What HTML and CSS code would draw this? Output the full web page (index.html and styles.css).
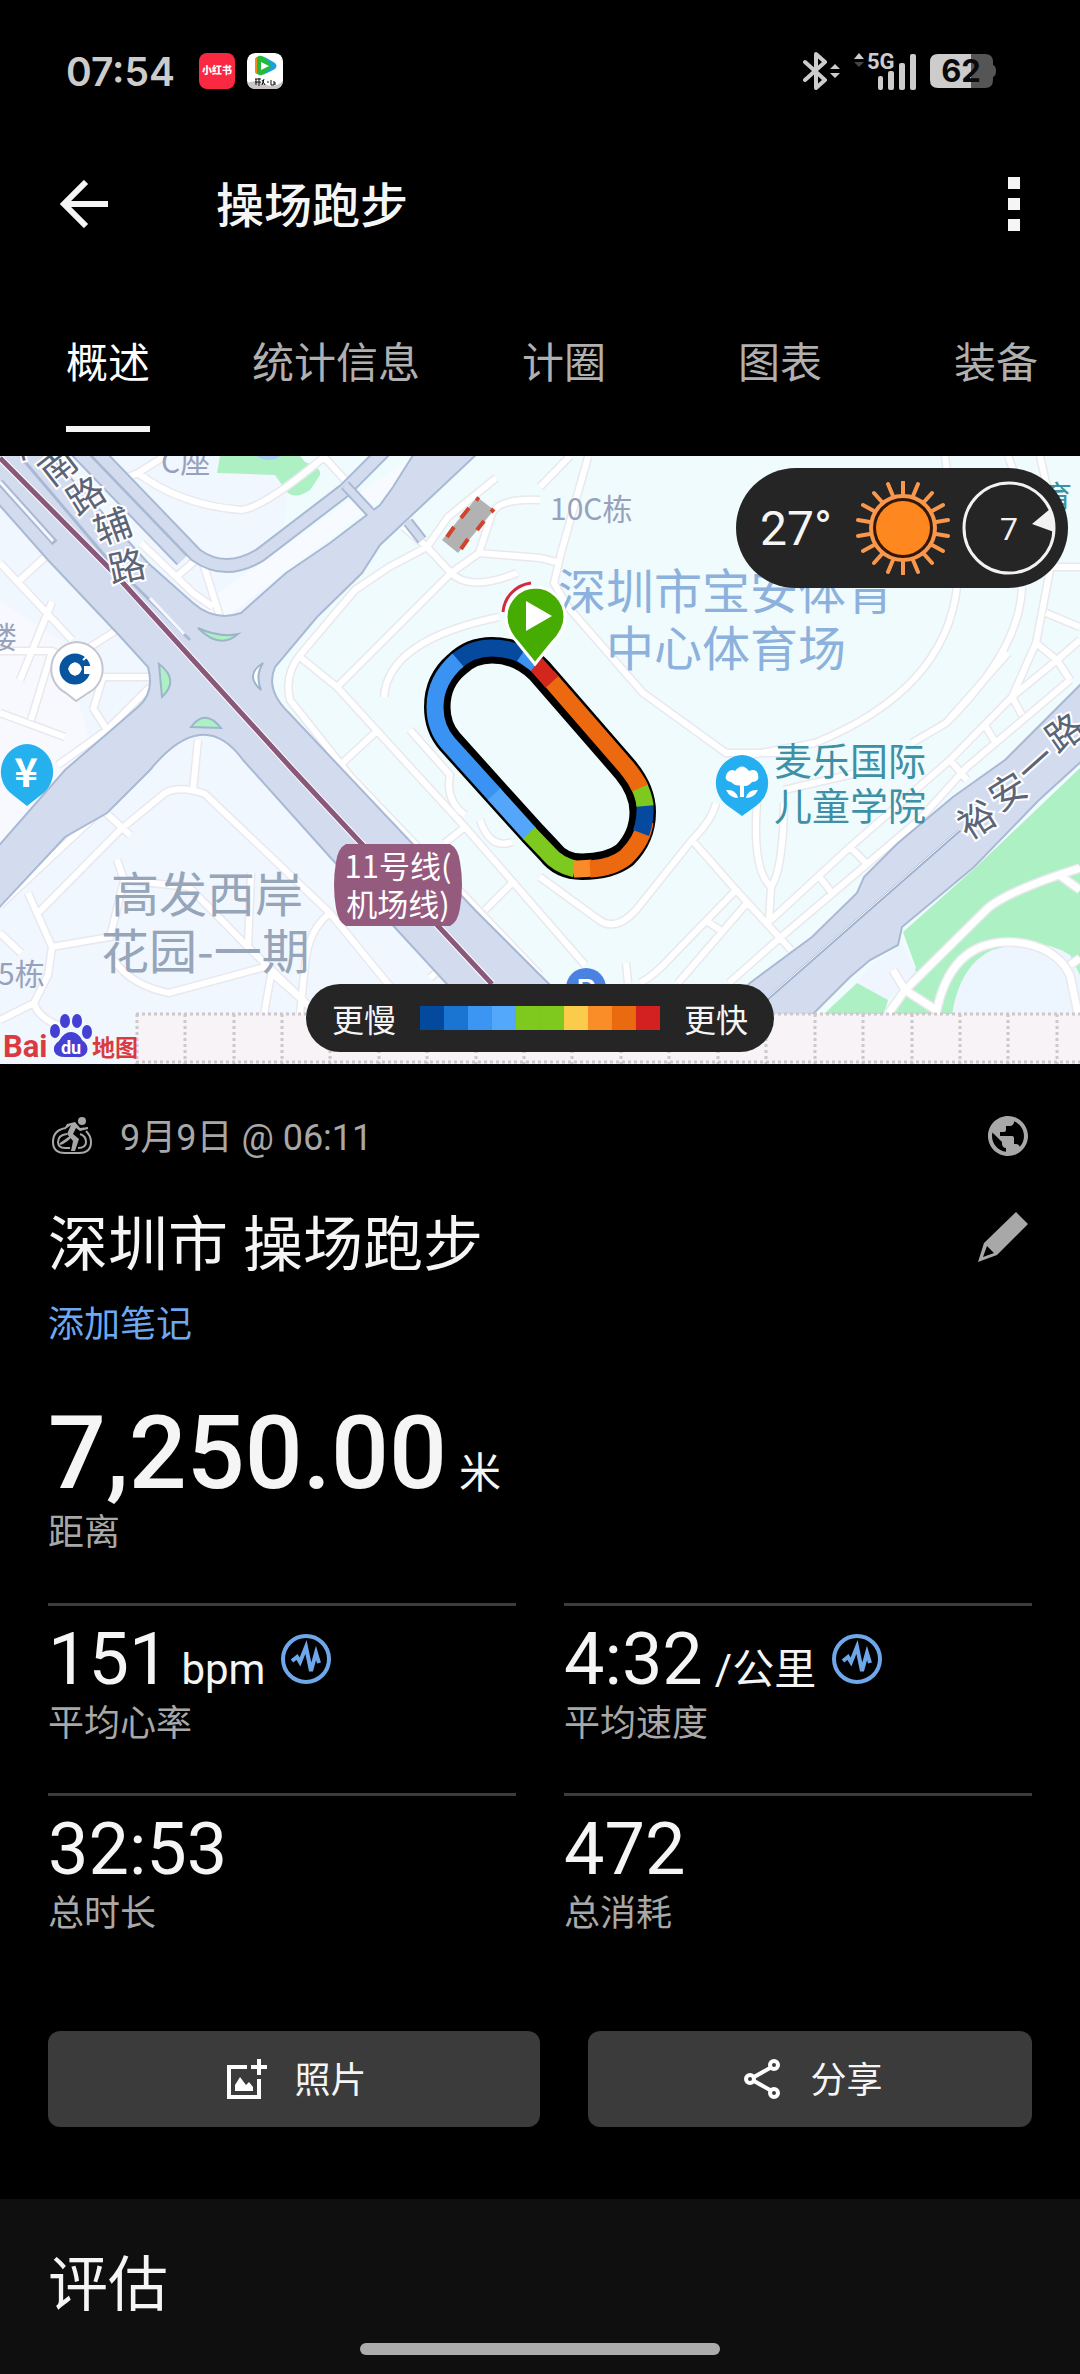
FILE: index.html
```html
<!DOCTYPE html>
<html lang="zh-CN">
<head>
  <meta charset="UTF-8">
  <title>操场跑步</title>
  <meta name="viewport" content="width=device-width, initial-scale=1.0">
  <link rel="stylesheet" href="styles.css">
</head>
<body>

  <!-- status bar -->
  <div class="status-bar">
    <span class="clock">07:54</span>
    <span class="app-icon app-red">小红书</span>
    <svg class="app-icon" viewBox="0 0 36 36">
      <rect width="36" height="36" rx="8" fill="#fff"/>
      <path d="M0 30q9 -4 18 1t18 -3v2q0 6 -6 6H8q-8 0 -8 -6z" fill="#c9c5c5"/>
      <path d="M8 7q0 -4 4 -3v17q-4 1 -4 -3z" fill="#f48a1c"/>
      <path d="M10 6q0 -4 5 -3l12 7q4 3 0 6l-12 6q-4 1 -5 -3z" fill="#25b93a"/>
      <path d="M16 3l12 7q3 3 0 6l-12 6q6 -5 8 -9q-2 -5 -8 -10z" fill="#1ba0e0"/>
      <path d="M14 9l8 4l-8 4z" fill="#fff"/>
      <path d="M8 26h6M8 29h6M9 26v6M12 25v8M15 27l3 5M17 26l-2 6M20 29h2M24 27v5h3v-4M28 29v3" stroke="#111" fill="none"/>
    </svg>
    <div class="status-right">
      <svg width="38" height="38" viewBox="0 0 38 38">
        <path d="M3 10l20 18l-9 8V2l9 8L3 28" fill="none" stroke="#ccc" stroke-width="4" stroke-linejoin="round" stroke-linecap="round"/>
        <path d="M28 17l5 -5l5 5zM28 21h10l-5 5z" fill="#ccc"/>
      </svg>
      <svg class="signal" width="62" height="38" viewBox="0 0 62 38">
        <path d="M0 7l5 -6l5 6z" fill="#ccc"/>
        <path d="M0 10h10l-5 5z" fill="#444"/>
        <text x="13" y="17" class="net">5G</text>
        <g fill="#ccc">
          <rect x="24" y="24" width="5" height="14" rx="2"/>
          <rect x="34" y="19" width="6" height="19" rx="2"/>
          <rect x="45" y="11" width="6" height="27" rx="2"/>
          <rect x="56" y="2" width="6" height="36" rx="2"/>
        </g>
      </svg>
      <svg width="66" height="34" viewBox="0 0 66 34">
        <path d="M8 0H41V34H8Q0 34 0 26V8Q0 0 8 0z" fill="#ccc"/>
        <path d="M41 0H55Q63 0 63 8V26Q63 34 55 34H41zM63 11q3 1 3 6t-3 6z" fill="#555"/>
        <text x="31" y="28" class="level" text-anchor="middle">62</text>
      </svg>
    </div>
  </div>

  <header class="app-bar">
    <button class="icon-btn" aria-label="返回">
      <svg width="48" height="48" viewBox="0 0 48 48"><path d="M26 2L4 24L26 46M4 24H48" fill="none" stroke="#f5f5f5" stroke-width="6"/></svg>
    </button>
    <h1>操场跑步</h1>
    <button class="icon-btn" aria-label="更多">
      <svg width="12" height="54" viewBox="0 0 12 54"><path d="M0 0h12v12H0zM0 21h12v12H0zM0 42h12v12H0z" fill="#f5f5f5"/></svg>
    </button>
  </header>

  <nav class="tabs">
    <a href="#overview" class="active">概述</a>
    <a href="#stats">统计信息</a>
    <a href="#laps">计圈</a>
    <a href="#charts">图表</a>
    <a href="#gear">装备</a>
  </nav>

  <div class="map">
    <svg class="map-canvas" viewBox="0 456 1080 608">
      <defs>
        <path id="loop" d="M541 669Q520 648 492 648Q470 648 455 663Q435 680 435 707Q435 728 448 743L530 834L548 853Q560 869 582 869Q610 869 626 857Q645 838 645 812Q645 790 627 768Z"/>
        <clipPath id="inside"><use href="#loop"/></clipPath>
        <path id="streets" d="M0 563L72 640M45 557L20 580M52 602L20 680M0 651L52 651L103 677H150M117 630L90 647M0 713L65 737M150 687L107 730L58 765M93 708L107 730M52 651L31 720M103 677L93 710
          M38 913L120 830L165 793Q180 785 205 794L330 913L393 990M198 740L193 790M28 893L52 947L110 937L124 880M52 947L48 975L34 1003L0 1020M34 1003Q38 1018 60 1026M117 860L124 880L189 887L248 947L310 1007M251 873L248 947M114 960Q130 985 169 993L265 967L310 1007M271 975L264 1014M330 913Q308 930 305 965L300 1014M0 933L21 953M103 810L130 835M0 905L150 765
          M138 473Q180 505 241 510Q265 507 324 457M138 473L114 483M131 500L179 533M203 563L220 617M141 543L193 593L213 607M176 577L196 560M138 473L165 456M324 457L345 480
          M404 527L427 547L389 567L355 590L300 655Q284 675 290 700L351 777L540 975M300 657L337 687L410 767L465 827L585 965M337 687L451 573L427 547M451 573L479 553L540 558L561 563M451 573Q470 592 517 573M384 697Q388 640 499 617M427 547L448 517L496 478M479 553L492 513Q500 498 540 500M410 730L450 775Q445 800 465 815M480 820Q490 850 512 842M337 768L378 730M445 843L465 827M485 910L515 880M430 978L445 965
          M588 457L561 553L554 583L568 607L643 693L726 753H780M957 587Q945 690 815 743L740 757M1022 587Q1020 650 946 723L912 743M1050 570L1036 643L1012 697L950 760L850 847L771 920M1080 567H1050M1046 613L1080 627M1036 643L1057 660L1080 640M1012 697L1057 660M1070 680L967 767L919 820L781 937L729 983M1008 653L946 723M1012 697L1022 715M1057 660L1070 680M985 725L995 742M950 760L967 780M850 847L868 865M818 875L832 893M945 456L948 480M1008 456L1015 475M1040 456L1050 500L1050 570M540 487L570 456
          M540 877L599 920Q616 932 636 910L692 840Q712 820 716 803M692 840L736 890L791 950M736 890L671 957Q655 975 640 983M747 903L678 983M757 803Q752 870 771 887Q783 870 784 803M771 887L769 923M626 963L628 983M705 920L720 930M784 790L870 770"/>
        <path id="park" d="M888 1014L905 990L988 908Q1010 890 1080 868M936 1014Q950 940 1012 942Q1055 945 1070 975L1078 1014M1058 874L1080 890M905 990L936 1010M893 970L905 990M1070 965L1080 958"/>
      </defs>

      <rect y="456" width="1080" height="608" fill="#f0f7ff"/>
      <path d="M0 600L60 640L90 740L0 860z" fill="#f7f9fe"/>
      <path d="M290 456H1080V1064H540L270 690z" fill="#effbfc"/>
      <path d="M413 456L180 620L225 618L405 480z" fill="#f7fbff"/>
      <path d="M220 456L217 473L275 475L287 492Q295 500 310 490L320 475Q322 468 305 462L300 456z" fill="#adf0c4"/>
      <path d="M256 456h24q-10 8 -24 0z" fill="#a9cdf5"/>

      <use href="#streets" fill="none" stroke="#e9e8ee" stroke-width="9"/>
      <use href="#streets" fill="none" stroke="#fff" stroke-width="6"/>

      <!-- avenues -->
      <g fill="#d3dcef" stroke="#a9b9d4" stroke-width="2">
        <path d="M76 450L182 560M95 450L196 555Q225 576 260 555L345 490L390 445" stroke="#a9b9d4" stroke-width="15" fill="none"/>
        <path d="M76 450L182 560M95 450L196 555Q225 576 260 555L345 490L390 445" stroke="#d3dcef" stroke-width="11" fill="none"/>
        <path d="M-5 500L48 560L117 633L148 667Q155 693 138 707L65 770L-5 850V912L65 837L107 813L150 770Q203 705 243 760L330 857L480 1020H585L475 910L289 713Q265 690 275 667L317 617L362 573L380 545L479 452H415L393 487L380 505L330 543L286 573L241 613Q215 622 193 603L148 563L100 510L45 450H-5z"/>
        <path d="M345 485L370 512M408 522L422 540" stroke-width="11"/>
        <path d="M345 485L372 514M407 521L422 540" stroke="#d3dcef" stroke-width="7"/>
        <path d="M700 1030L750 983L812 937L857 893L864 877L898 843L953 797L1005 760L1085 680V758L1039 800L974 867L902 927L898 945L870 960L850 977L805 1022z"/>
      </g>
      <path d="M20 456L105 556L190 640" fill="none" stroke="#a9b9d4" stroke-width="3"/>
      <path d="M0 482L55 543" stroke="#a9b9d4" stroke-width="7"/>
      <path d="M0 482L53 541M150 598L184 634" stroke="#f4f8fd" stroke-width="3"/>
      <path d="M755 1010L960 830" stroke="#9fb1cf" stroke-width="3"/>
      <path d="M755 1009L960 829" stroke="#fff"/>
      <g fill="#adf0c4" stroke="#9db5cb" stroke-width="2">
        <path d="M198 628Q220 638 238 634Q220 650 198 628z"/>
        <path d="M159 664Q180 680 162 697z"/>
        <path d="M191 727Q205 708 221 728z"/>
        <path d="M263 663Q244 675 261 690Q255 675 263 663z" fill="#fff"/>
      </g>

      <!-- park -->
      <path d="M903 932L975 868L1080 768V1014H888L916 968z" fill="#adf0c4"/>
      <path d="M903 945L916 972L888 1000L857 983L870 965z" fill="#f0f6ff"/>
      <path d="M824 1014L857 983L888 1000L884 1014z" fill="#adf0c4"/>
      <path d="M952 1014Q960 965 992 950Q1040 935 1070 955L1080 975V1014z" fill="#edf5ff"/>
      <use href="#park" fill="none" stroke="#e9e8ee" stroke-width="10"/>
      <use href="#park" fill="none" stroke="#fff" stroke-width="7"/>

      <path d="M136 1014H1080V1064H136z" fill="#f7f3f7"/>
      <path d="M136 1014H1080M136 1062H1080M137 1014V1064M185 1014V1064M234 1014V1064M282 1014V1064M330 1014V1064M379 1014V1064M427 1014V1064M476 1014V1064M524 1014V1064M572 1014V1064M621 1014V1064M669 1014V1064M718 1014V1064M766 1014V1064M815 1014V1064M863 1014V1064M912 1014V1064M960 1014V1064M1008 1014V1064M1057 1014V1064" stroke="#ccc8cc" stroke-width="3" stroke-dasharray="3 3"/>

      <!-- metro line 11 -->
      <path d="M0 458L114 573L293 770L492 984" fill="none" stroke="#fff" stroke-width="7"/>
      <path d="M0 458L114 573L293 770L492 984" fill="none" stroke="#89587a" stroke-width="5"/>

      <path d="M477 497L494 510L458 553L442 540z" fill="#b2b2b2"/>
      <path d="M469 508L461 518M454 527L447 537M484 521L477 530M468 539L461 549M476 498L479 500M491 509L494 512" stroke="#d1432c" stroke-width="4"/>

      <g class="lbl">
        <text x="161" y="473" font-size="30" fill="#98a1bc">C座</text>
        <text x="550" y="520" font-size="30" fill="#98a1bc">10C栋</text>
        <text x="-13" y="648" font-size="30" fill="#98a1bc">楼</text>
        <text x="-2" y="985" font-size="30" fill="#98a1bc">5栋</text>
        <text x="1042" y="507" font-size="30" fill="#3d90a5">育</text>
        <text x="558" y="609" font-size="48" fill="#8cb1dd">深圳市宝安体育</text>
        <text x="606" y="666" font-size="48" fill="#8cb1dd">中心体育场</text>
        <text x="111" y="912" font-size="48" fill="#97a5b9">高发西岸</text>
        <text x="101" y="969" font-size="48" fill="#97a5b9">花园-一期</text>
        <text x="774" y="775" font-size="38" fill="#3d90a5">麦乐国际</text>
        <text x="774" y="820" font-size="38" fill="#3d90a5">儿童学院</text>
      </g>
      <g class="lbl road-name" font-size="37" text-anchor="middle">
        <text transform="translate(26 440) rotate(-40)" y="13">海</text>
        <text transform="translate(58 466) rotate(-38)" y="13">南</text>
        <text transform="translate(86 496) rotate(-32)" y="13">路</text>
        <text transform="translate(113 527) rotate(-20)" y="13">辅</text>
        <text transform="translate(127 567) rotate(-12)" y="13">路</text>
        <text transform="translate(977 820) rotate(-32)" y="13">裕</text>
        <text transform="translate(1008 792) rotate(-32)" y="13">安</text>
        <text transform="translate(1036 764) rotate(-42)" y="13">一</text>
        <text transform="translate(1065 733) rotate(-35)" y="13">路</text>
      </g>

      <path d="M346 844H450Q458 848 460 862Q464 885 460 908Q458 922 450 926H346Q338 922 336 908Q332 885 336 862Q338 848 346 844z" fill="#955b7e"/>
      <g class="lbl" font-size="31" fill="#fff" text-anchor="middle">
        <text x="398" y="878">11号线(</text>
        <text x="398" y="916">机场线)</text>
      </g>

      <!-- places -->
      <path d="M76 642a27 27 0 0 1 12 51L76 701L66 693A27 27 0 0 1 76 642z" fill="#fff" stroke="#c5c6cf" stroke-width="2"/>
      <circle cx="75" cy="669" r="11" fill="none" stroke="#07559f" stroke-width="9"/>
      <path d="M85 667h8v6h-8zM83 660l7 -6" fill="#fff" stroke="#fff" stroke-width="2"/>
      <path d="M75 662l7 7l-7 7l-7 -7z" fill="#fff"/>
      <path d="M27 744a28 28 0 0 1 14 51L27 806L13 795A28 28 0 0 1 27 744z" fill="#25b0ee"/>
      <text x="26" y="787" class="yen" text-anchor="middle">¥</text>
      <path d="M742 755a28 28 0 0 1 14 51L742 816L728 806A28 28 0 0 1 742 755z" fill="#25aff0"/>
      <path d="M731 782q-8 -1 -4 -9q4 -5 8 -2q7 -9 14 0q7 -3 9 3q2 8 -6 8q-5 6 -10 3q-6 2 -11 -3zM740 784h4v13h-4zM726 790q10 -1 12 8q-8 0 -12 -8zM758 790q-10 -1 -12 8q8 0 12 -8z" fill="#fff"/>
      <circle cx="586" cy="988" r="20" fill="#4a82e2"/>
      <text x="586" y="1000" class="parking" text-anchor="middle">P</text>

      <!-- track coloured by pace -->
      <use href="#loop" fill="none" stroke="#000" stroke-width="22" stroke-linejoin="round"/>
      <use href="#loop" fill="none" stroke="#000" stroke-width="31" clip-path="url(#inside)"/>
      <g fill="none" stroke-width="17">
        <path d="M523 655Q508 648 492 648Q470 648 455 663" stroke="#054a9f"/>
        <path d="M458 660Q435 680 435 707Q435 728 448 743L495 795" stroke="#3a93f2"/>
        <path d="M494 794L530 834" stroke="#53a6fa"/>
        <path d="M529 833L548 853Q558 865 575 869" stroke="#7ec91f"/>
        <path d="M574 869Q580 869 592 868" stroke="#fb8b28"/>
        <path d="M590 869Q612 868 626 857Q643 840 645 822" stroke="#ec6910"/>
        <path d="M641 833Q646 820 645 802" stroke="#054a9f"/>
        <path d="M645 806Q644 795 637 782" stroke="#7ec91f"/>
        <path d="M640 788Q636 779 627 768L548 677" stroke="#ec6910"/>
        <path d="M552 682L536 664" stroke="#d3261d"/>
        <path d="M536 664L522 654" stroke="#3a93f2"/>
      </g>

      <path d="M503 612A32 32 0 0 1 531 583" fill="none" stroke="#d12a43" stroke-width="3"/>
      <path d="M535 587a30 30 0 0 1 30 30Q565 630 552 643L535 664L518 643Q506 630 506 617A30 30 0 0 1 535 587z" fill="#47ac02" stroke="#fff" stroke-width="3"/>
      <path d="M526 601L552 616L526 631z" fill="#fff"/>

      <!-- map provider -->
      <g class="baidu">
        <text x="3" y="1057" font-size="31" fill="#d93b3f">Bai</text>
        <g fill="#4340d3">
          <ellipse cx="55" cy="1031" rx="5" ry="7"/>
          <ellipse cx="65" cy="1021" rx="5" ry="7"/>
          <ellipse cx="77" cy="1021" rx="5" ry="7"/>
          <ellipse cx="87" cy="1032" rx="5" ry="7"/>
          <path d="M71 1032q7 0 11 8q7 5 5 12q-3 6 -10 5h-12q-9 0 -11 -6q-1 -6 5 -10q5 -9 12 -9z"/>
        </g>
        <text x="71" y="1054" font-size="18" fill="#fff" text-anchor="middle">du</text>
        <text x="92" y="1056" font-size="23" fill="#d93b3f">地图</text>
      </g>
    </svg>

    <div class="weather">
      <span>27°</span>
      <svg class="sun" width="94" height="94" viewBox="-47 -47 94 94">
        <path d="M0 -34V-46M0 34V46M10 -32L15 -44M-10 -32L-15 -44M10 32L15 44M-10 32L-15 44M21 -26L29 -35M-21 -26L-29 -35M21 26L29 35M-21 26L-29 35M29 -17L40 -23M-29 -17L-40 -23M29 17L40 23M-29 17L-40 23M33 -6L45 -8M-33 -6L-45 -8M33 6L45 8M-33 6L-45 8" stroke="#f9974c" stroke-width="4" stroke-linecap="round"/>
        <circle r="32" fill="#32190a" stroke="#f9974c" stroke-width="4"/>
        <circle r="27" fill="#ff871f"/>
      </svg>
      <svg width="94" height="94" viewBox="-47 -47 94 94">
        <circle r="45" fill="none" stroke="#f2f2f2" stroke-width="3"/>
        <path d="M23 -4L41 -19Q46 -8 45 4z" fill="#f2f2f2"/>
        <text y="12" class="wind" text-anchor="middle">7</text>
      </svg>
    </div>

    <div class="legend">
      <span>更慢</span>
      <div class="scale">
        <i class="c1"></i><i class="c2"></i><i class="c3"></i><i class="c4"></i><i class="c5"></i><i class="c5"></i><i class="c6"></i><i class="c7"></i><i class="c8"></i><i class="c9"></i>
      </div>
      <span>更快</span>
    </div>
  </div>

  <main class="summary">
    <div class="meta">
      <svg width="40" height="40" viewBox="0 0 40 40" fill="none" stroke="#a8a8a8" stroke-width="2">
        <path d="M14 12Q1 14 1 26Q1 37 13 37H27Q39 37 39 26Q39 20 34 15"/>
        <path d="M15 18Q6 19 6 26Q6 32 13 32H18M28 18Q34 20 34 26Q34 32 26 32M8 28Q15 26 20 19M8 28L18 21"/>
        <path d="M12 13L15 8L23 6L28 12L36 11L36 13L28 15L24 12L21 18L27 23L23 35H19L21 25L15 18L19 9L15 12z" fill="#a8a8a8" stroke="none"/>
        <circle cx="30" cy="5" r="4" fill="#a8a8a8" stroke="none"/>
      </svg>
      <time>9月9日 @ 06:11</time>
      <button class="icon-btn end" aria-label="隐私">
        <svg width="40" height="40" viewBox="2 2 20 20" fill="#a8a8a8"><path d="M12 2C6.480 2 2 6.480 2 12s4.480 10 10 10 10-4.480 10-10S17.520 2 12 2zm-1 17.930c-3.950-.49-7-3.850-7-7.930 0-.62.080-1.210.210-1.790L9 15v1c0 1.100.9 2 2 2v1.930zm6.900-2.540c-.26-.81-1-1.390-1.900-1.390h-1v-3c0-.55-.45-1-1-1H8v-2h2c.55 0 1-.45 1-1V7h2c1.100 0 2-.9 2-2v-.41c2.930 1.190 5 4.060 5 7.410 0 2.080-.8 3.970-2.100 5.390z"/></svg>
      </button>
    </div>

    <div class="title-row">
      <h2>深圳市 操场跑步</h2>
      <button class="icon-btn end" aria-label="编辑">
        <svg width="50" height="50" viewBox="0 0 50 50" fill="#a8a8a8"><path d="M38 0L50 12L19 43L0 50L6 31zM9 34L5 45L16 41z" fill-rule="evenodd"/></svg>
      </button>
    </div>
    <a class="note" href="#note">添加笔记</a>

    <div class="distance"><b>7,250.00</b><span class="unit">米</span></div>
    <div class="label">距离</div>

    <div class="stats">
      <div class="stat">
        <div class="value">151<span class="unit">bpm</span>
          <svg class="chart-icon" viewBox="0 0 50 50"><circle cx="25" cy="25" r="23"/><path d="M11 27L16 23L19 28L25 13L30 37L35 19L38 29"/></svg>
        </div>
        <div class="label">平均心率</div>
      </div>
      <div class="stat">
        <div class="value">4:32<span class="unit">/公里</span>
          <svg class="chart-icon" viewBox="0 0 50 50"><circle cx="25" cy="25" r="23"/><path d="M11 27L16 23L19 28L25 13L30 37L35 19L38 29"/></svg>
        </div>
        <div class="label">平均速度</div>
      </div>
      <div class="stat">
        <div class="value">32:53</div>
        <div class="label">总时长</div>
      </div>
      <div class="stat">
        <div class="value">472</div>
        <div class="label">总消耗</div>
      </div>
    </div>
  </main>

  <div class="actions">
    <div>
      <button class="action">
        <svg width="40" height="40" viewBox="0 0 40 40" fill="#fff"><path d="M0 6H20V10H4V36H30V20H34V40H0zM30 0H34V6H40V10H34V16H30V10H24V6H30zM8 32V26L13 18L19 26L22 23L26 28V32z"/></svg>
        <span>照片</span>
      </button>
    </div>
    <div>
      <button class="action">
        <svg width="40" height="40" viewBox="0 0 40 40" fill="none" stroke="#fff" stroke-width="4"><circle cx="7" cy="20" r="4"/><circle cx="31" cy="6" r="4"/><circle cx="31" cy="34" r="4"/><path d="M11 18L27 9M11 22L27 31"/></svg>
        <span>分享</span>
      </button>
    </div>
  </div>

  <section class="evaluation">
    <h2>评估</h2>
  </section>
  <div class="home-bar"></div>

</body>
</html>
```

FILE: styles.css
```css
* {
  box-sizing: border-box;
}

body {
  margin: 0;
  min-height: 100vh;
  display: flex;
  flex-direction: column;
  position: relative;
  background: #000;
  color: #f5f5f5;
  font-family: Roboto, "Noto Sans CJK SC", sans-serif;
  font-size: 36px;
  overflow-x: hidden;
}

h1, h2 {
  margin: 0;
  font-weight: 400;
}

a {
  text-decoration: none;
}

svg {
  display: block;
  flex-shrink: 0;
}

button {
  border: none;
  padding: 0;
  background: none;
  color: inherit;
  font: inherit;
  cursor: pointer;
}

/* status bar */
.status-bar {
  display: flex;
  align-items: center;
  height: 142px;
  padding: 0 84px 0 66px;
}

.clock {
  color: #ccc;
  font: 600 39px Inter, sans-serif;
  margin-right: 24px;
}

.app-icon {
  width: 36px;
  height: 36px;
  border-radius: 8px;
  margin-right: 12px;
}

.app-red {
  background: #fb2841;
  color: #fff;
  font-size: 10px;
  font-weight: 900;
  line-height: 36px;
  text-align: center;
}

.status-right {
  display: flex;
  align-items: center;
  gap: 14px;
  margin-left: auto;
}

.signal {
  overflow: visible;
}

.net {
  fill: #ccc;
  font: 700 22px Roboto, sans-serif;
}

.level {
  fill: #0a0a0a;
  font: 700 31px Inter, sans-serif;
}

/* top bar */
.app-bar {
  display: flex;
  align-items: center;
  height: 124px;
  padding: 0 60px;
}

.app-bar h1 {
  flex: 1;
  margin-left: 108px;
  padding-bottom: 4px;
  font-size: 48px;
  font-weight: 500;
}

.tabs {
  display: flex;
  height: 190px;
  overflow: hidden;
}

.tabs a {
  position: relative;
  display: flex;
  flex-shrink: 0;
  align-items: center;
  justify-content: center;
  min-width: 216px;
  padding: 0 36px 4px;
  color: #b0b0b0;
  font-size: 42px;
}

.tabs .active {
  color: #fff;
}

.tabs .active::after {
  content: "";
  position: absolute;
  left: 66px;
  right: 66px;
  bottom: 24px;
  height: 6px;
  background: #f5f5f5;
}

/* map */
.map {
  position: relative;
}

.map-canvas {
  width: 100%;
  height: auto;
}

.lbl {
  font-family: "Noto Sans CJK SC", sans-serif;
}

.road-name {
  fill: #5c6578;
  stroke: #fff;
  stroke-width: 4px;
  paint-order: stroke;
}

.yen {
  fill: #fff;
  font: 700 40px "Noto Sans CJK SC", sans-serif;
}

.parking {
  fill: #fff;
  font: 500 30px Roboto, sans-serif;
}

.baidu {
  font-family: Roboto, "Noto Sans CJK SC", sans-serif;
  font-weight: 700;
}

.weather {
  position: absolute;
  top: 12px;
  right: 12px;
  display: flex;
  align-items: center;
  height: 120px;
  padding: 0 12px 0 24px;
  border-radius: 60px;
  background: #252525;
  font-size: 48px;
}

.sun {
  margin: 0 12px 0 24px;
}

.wind {
  fill: #f2f2f2;
  font-size: 32px;
}

.legend {
  position: absolute;
  bottom: 12px;
  left: 50%;
  transform: translateX(-50%);
  display: flex;
  align-items: center;
  gap: 24px;
  height: 68px;
  padding: 0 26px;
  border-radius: 34px;
  background: #252525;
  font-size: 32px;
  white-space: nowrap;
}

.scale {
  display: flex;
}

.scale i {
  width: 24px;
  height: 24px;
}

.c1 { background: #034a9e; }
.c2 { background: #1a75d2; }
.c3 { background: #3b96f3; }
.c4 { background: #54a8fb; }
.c5 { background: #7fc91f; }
.c6 { background: #fbcb4c; }
.c7 { background: #fb8d28; }
.c8 { background: #ea6a10; }
.c9 { background: #d32121; }

/* summary */
.summary {
  padding: 52px 48px 0;
}

.meta {
  display: flex;
  align-items: center;
  height: 40px;
  padding: 0 4px;
  color: #a8a8a8;
}

.meta time {
  margin-left: 28px;
  padding-bottom: 4px;
}

.end {
  margin-left: auto;
}

.title-row {
  display: flex;
  align-items: flex-start;
  margin-top: 56px;
  padding-right: 4px;
}

h2 {
  font-size: 60px;
  line-height: 68px;
}

.note {
  display: block;
  margin-top: 21px;
  line-height: 48px;
  color: #6ea8f0;
}

.distance {
  display: flex;
  align-items: baseline;
  height: 104px;
  margin-top: 52px;
  line-height: 104px;
}

.distance b {
  font-size: 102px;
  font-weight: 500;
}

.unit {
  margin-left: 12px;
  font-size: 42px;
}

.label {
  margin-top: 4px;
  color: #a8a8a8;
  line-height: 48px;
}

.stats {
  display: grid;
  grid-template-columns: 1fr 1fr;
  column-gap: 48px;
  margin-top: 46px;
}

.stat {
  height: 190px;
  padding-top: 18px;
  border-top: 3px solid #3c3c3c;
}

.value {
  display: flex;
  align-items: baseline;
  height: 72px;
  font-size: 72px;
  line-height: 72px;
}

.chart-icon {
  width: 50px;
  height: 50px;
  margin-left: 16px;
  fill: none;
  stroke: #6ea8ea;
  stroke-width: 4px;
}

/* buttons */
.actions {
  display: grid;
  grid-template-columns: 1fr 1fr;
  margin: 48px 0 72px;
}

.actions div {
  padding-left: 48px;
}

.actions div:last-child {
  padding-right: 48px;
}

.action {
  display: flex;
  align-items: center;
  justify-content: center;
  gap: 27px;
  width: 100%;
  height: 96px;
  padding-left: 6px;
  border-radius: 12px;
  background: #3b3b3b;
}

.action span {
  padding-bottom: 4px;
}

.evaluation {
  flex: 1;
  padding: 53px 48px 0;
  background: #0f0f0f;
}

.home-bar {
  position: absolute;
  bottom: 19px;
  left: 50%;
  width: 360px;
  height: 12px;
  margin-left: -180px;
  border-radius: 6px;
  background: #acacac;
}
```
